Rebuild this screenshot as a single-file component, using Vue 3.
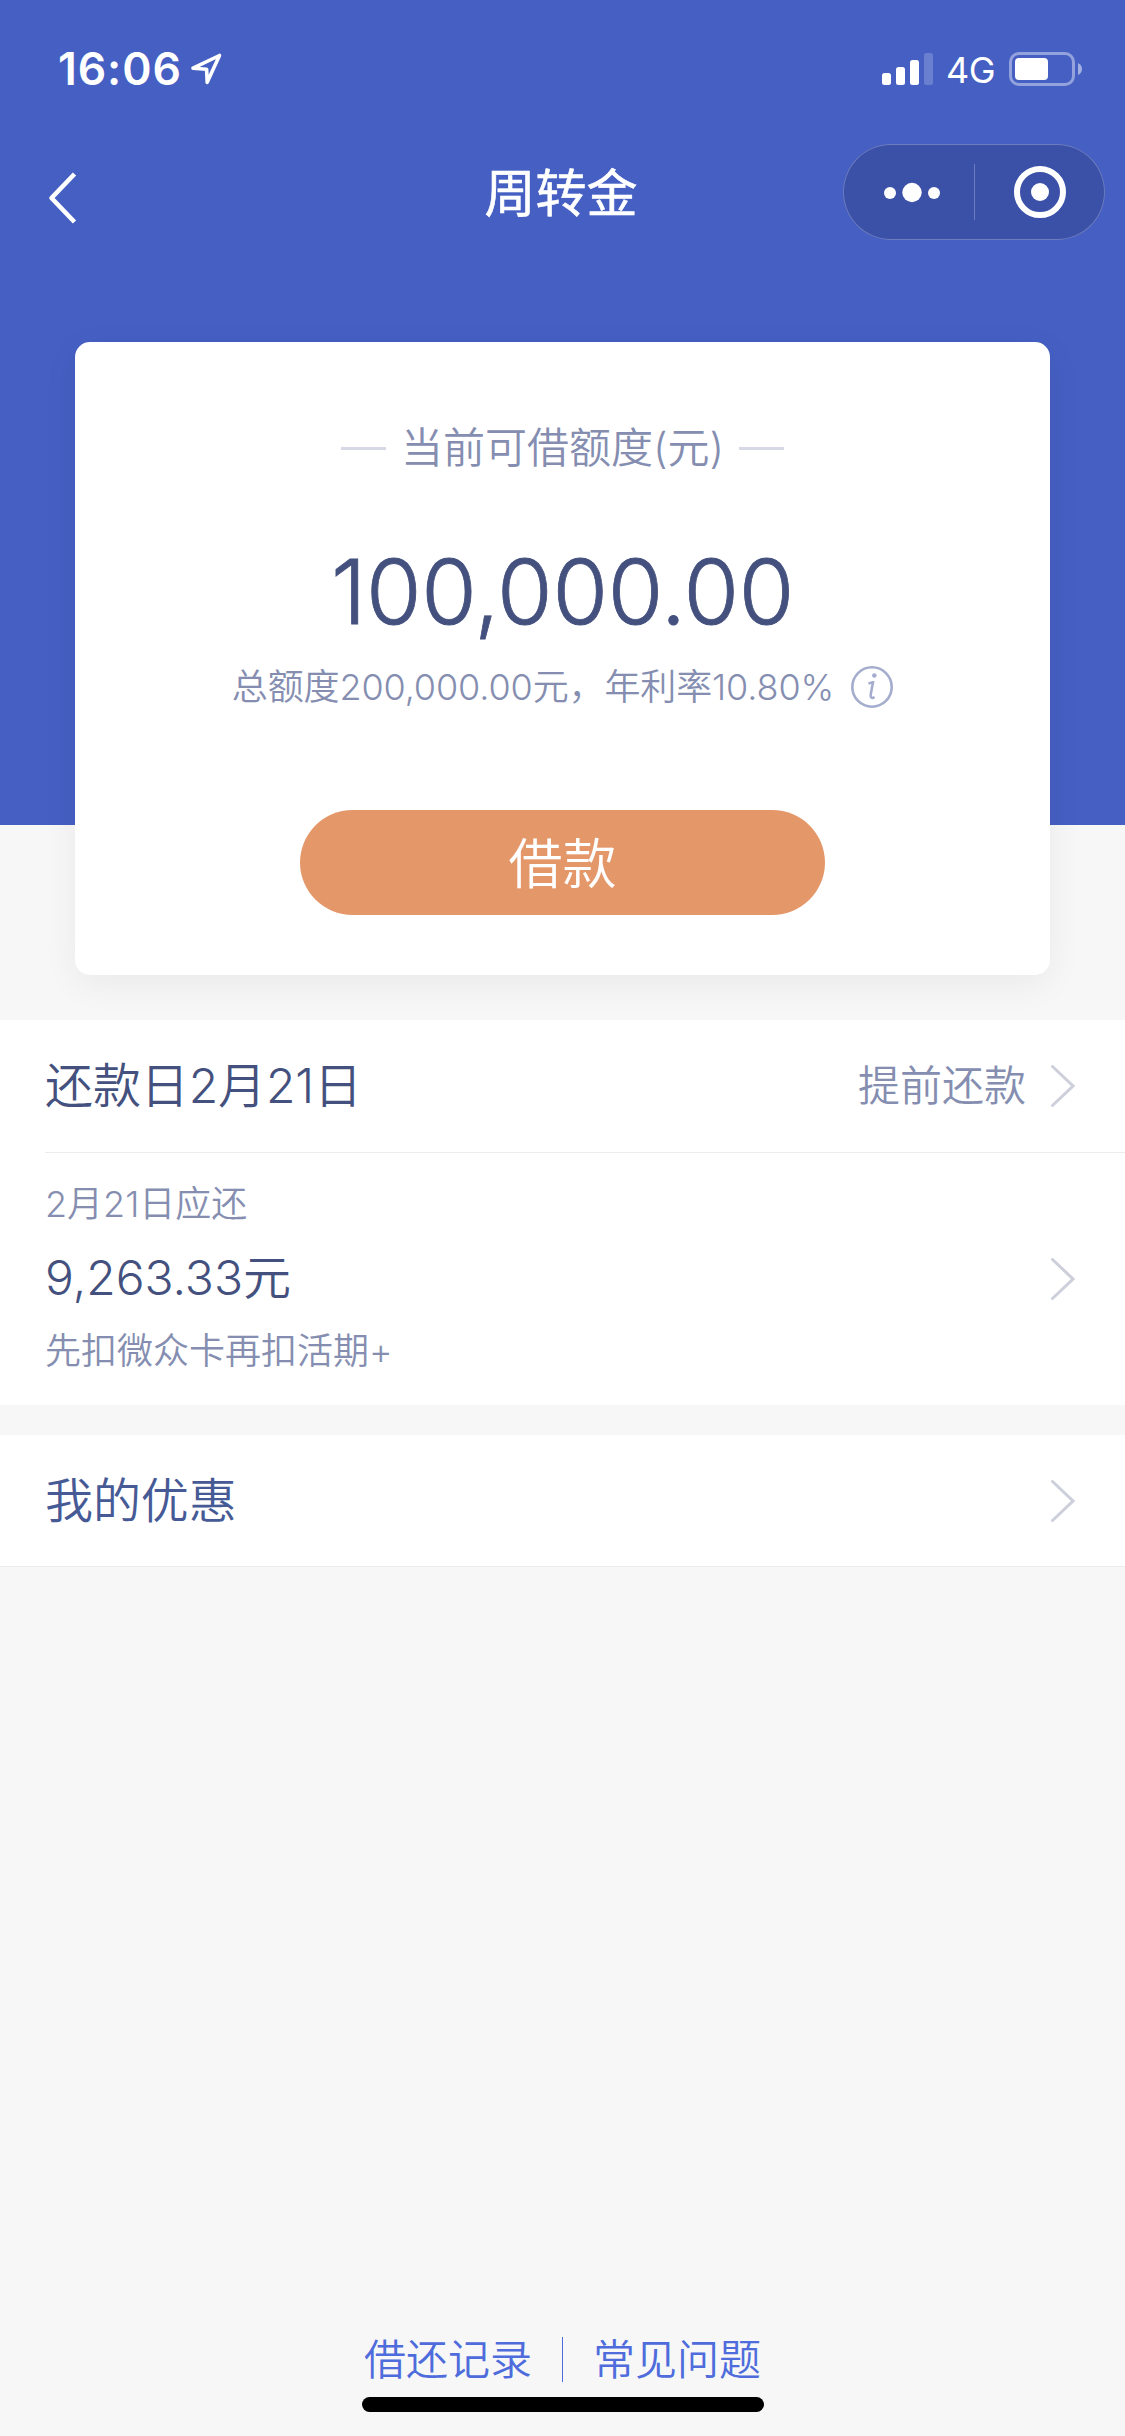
<script setup>
const quota = {
  available: '100,000.00',
  summary: '总额度200,000.00元，年利率10.80%',
}
const bill = {
  title: '还款日2月21日',
  action: '提前还款',
  label: '2月21日应还',
  amount: '9,263.33元',
  note: '先扣微众卡再扣活期+',
}
</script>

<template>
  <div class="page">
    <header class="hero">
      <div class="status">
        <span class="time">16:06</span>
        <svg class="location" width="34" height="34" viewBox="0 0 34 34">
          <path d="M3 16.2 29.5 3.5 17.2 30.3 16.6 17.2Z" />
        </svg>
        <svg class="signal" width="51" height="32" viewBox="0 0 51 32">
          <rect x="0" y="20" width="9" height="12" rx="2.5" />
          <rect x="14" y="14" width="9" height="18" rx="2.5" />
          <rect x="28" y="7" width="9" height="25" rx="2.5" />
          <rect x="42" y="0" width="9" height="32" rx="2.5" opacity=".2" />
        </svg>
        <span class="network">4G</span>
        <svg class="battery" width="74" height="34" viewBox="0 0 74 34">
          <rect class="shell" x="1.5" y="1.5" width="63" height="31" rx="8.5" />
          <rect x="6" y="6" width="33" height="22" rx="4" />
          <path d="M69 11Q73 13 73 17T69 23Z" opacity=".5" />
        </svg>
      </div>
      <div class="nav">
        <svg class="back" width="30" height="54" viewBox="0 0 30 54">
          <path d="M26.5 3 3.5 27 26.5 51" />
        </svg>
        <h1>周转金</h1>
        <div class="capsule">
          <svg width="262" height="96" viewBox="0 0 262 96">
            <circle cx="47" cy="49" r="6" />
            <circle cx="69" cy="48.5" r="9.7" />
            <circle cx="91" cy="49" r="6" />
            <rect class="split" x="131" y="20" width="1" height="56" />
            <circle class="ring" cx="197" cy="48" r="23" />
            <circle cx="197" cy="48" r="9" />
          </svg>
        </div>
      </div>
    </header>

    <section class="card">
      <div class="caption"><i></i><span>当前可借额度(元)</span><i></i></div>
      <div class="available">{{ quota.available }}</div>
      <div class="summary">
        <span>{{ quota.summary }}</span>
        <svg width="42" height="42" viewBox="0 0 42 42">
          <circle cx="21" cy="21" r="19.7" />
          <circle class="dot" cx="23.3" cy="9.5" r="2.3" />
          <path d="M17.5 17.5C19.5 17 20.5 16.3 22 16.3L19.7 28.5C19.2 32 21 32.8 23.5 31" />
        </svg>
      </div>
      <button>借款</button>
    </section>

    <section class="list">
      <div class="row head">
        <span class="title">{{ bill.title }}</span>
        <span class="action">{{ bill.action }}</span>
        <svg class="chevron" width="24" height="42" viewBox="0 0 24 42"><path d="M1.5 1.5 22 21 1.5 40.5" /></svg>
      </div>
      <div class="row bill">
        <div class="detail">
          <p class="small">{{ bill.label }}</p>
          <p class="amount">{{ bill.amount }}</p>
          <p class="small">{{ bill.note }}</p>
        </div>
        <svg class="chevron" width="24" height="42" viewBox="0 0 24 42"><path d="M1.5 1.5 22 21 1.5 40.5" /></svg>
      </div>
    </section>

    <section class="list offers">
      <div class="row">
        <span class="title">我的优惠</span>
        <svg class="chevron" width="24" height="42" viewBox="0 0 24 42"><path d="M1.5 1.5 22 21 1.5 40.5" /></svg>
      </div>
    </section>

    <footer>
      <nav><a>借还记录</a><i></i><a>常见问题</a></nav>
      <div class="home"></div>
    </footer>
  </div>
</template>

<style>
body { margin: 0; }
</style>

<style scoped>
* { box-sizing: border-box; }
.page {
  display: flex;
  flex-direction: column;
  width: 1125px;
  height: 2436px;
  background: #f7f7f7;
  font-family: Inter, "Noto Sans CJK SC", sans-serif;
  font-weight: 350;
  color: #44517e;
}
.hero {
  flex: none;
  height: 825px;
  background: #455fc3;
  color: #fff;
}
.status {
  display: flex;
  align-items: center;
  height: 138px;
  padding: 0 42px 0 58px;
}
.status svg { fill: #fff; }
.time {
  width: 124px;
  font-size: 44.5px;
  font-weight: 600;
  letter-spacing: .9px;
  white-space: nowrap;
}
.status .location {
  margin-left: 8px;
  fill: none;
  stroke: #fff;
  stroke-width: 3.6;
  stroke-linejoin: round;
}
.signal { margin-left: auto; }
.network {
  margin: 1px 14px 0 13px;
  width: 49px;
  font-size: 36px;
  font-weight: 400;
  letter-spacing: -.5px;
}
.battery .shell {
  fill: none;
  stroke: #fff;
  stroke-width: 3;
  opacity: .42;
}
.nav {
  display: grid;
  grid-template-columns: 1fr auto 1fr;
  align-items: center;
  height: 108px;
  padding: 0 20px 0 48px;
}
.back {
  margin-top: 12px;
  fill: none;
  stroke: #fff;
  stroke-width: 4.6;
  stroke-linejoin: round;
}
h1 {
  margin: 4px 0 0 -31px;
  font-size: 51px;
  font-weight: 400;
  line-height: 76px;
  -webkit-text-stroke: .6px #fff;
}
.capsule {
  justify-self: end;
  width: 262px;
  height: 96px;
  border-radius: 48px;
  background: #3b50a7;
  box-shadow: inset 0 0 0 1px rgba(255, 255, 255, .25);
}
.capsule svg { display: block; fill: #fff; }
.capsule .ring { fill: none; stroke: #fff; stroke-width: 6; }
.capsule .split { opacity: .25; }
.card {
  position: relative;
  display: flex;
  flex: none;
  flex-direction: column;
  align-items: center;
  width: 975px;
  height: 633px;
  margin: -483px 75px 45px;
  border-radius: 15px;
  background: #fff;
  box-shadow: 0 9px 36px rgba(0, 0, 0, .06);
}
.caption {
  display: flex;
  align-items: center;
  gap: 15px;
  margin-top: 76px;
  font-size: 42px;
  line-height: 60px;
  color: #858eb0;
}
.caption i { width: 45px; height: 3px; background: #d6d9e5; }
.available {
  margin-top: 64px;
  font-size: 90px;
  line-height: 100px;
  letter-spacing: -.3px;
  -webkit-text-stroke: .8px #44517e;
}
.summary {
  display: flex;
  align-items: center;
  gap: 17px;
  margin-top: 18px;
  font-size: 36px;
  line-height: 54px;
  letter-spacing: -.12px;
  color: #858eb0;
}
.summary svg { fill: none; stroke: #a4adcd; stroke-width: 2.6; }
.summary .dot { fill: #a4adcd; stroke: none; }
button {
  width: 525px;
  height: 105px;
  margin-top: 96px;
  padding: 0 0 4px;
  border: 0;
  border-radius: 53px;
  background: #e4986a;
  color: #fff;
  font: inherit;
  font-size: 54px;
}
.list { flex: none; background: #fff; }
.row {
  display: flex;
  align-items: center;
  margin-left: 45px;
  padding-right: 50px;
}
.head { height: 133px; border-bottom: 1px solid #ececec; }
.bill { height: 252px; }
.title {
  margin-right: auto;
  font-size: 48px;
  line-height: 66px;
  letter-spacing: -.1px;
}
.action { margin-right: 25px; font-size: 42px; line-height: 66px; color: #858eb0; }
.chevron {
  flex: none;
  fill: none;
  stroke: #cdcfdb;
  stroke-width: 3;
  stroke-linecap: round;
}
.detail { margin: -4px auto 0 0; }
.detail p { margin: 0; }
.small { font-size: 36px; line-height: 60px; color: #858eb0; }
.amount { font-size: 48px; line-height: 87px; }
.offers {
  height: 132px;
  margin-top: 30px;
  border-bottom: 1px solid #ececec;
}
.offers .row { height: 131px; }
.offers .title { color: #465a96; }
footer {
  display: flex;
  flex-direction: column;
  align-items: center;
  margin-top: auto;
  padding-bottom: 24px;
}
nav {
  display: flex;
  align-items: center;
  gap: 30px;
  margin-bottom: 15px;
  font-size: 42px;
  line-height: 45px;
  color: #4f6cdc;
}
nav i { width: 1px; height: 45px; background: #4f6cdc; }
.home { width: 402px; height: 15px; border-radius: 8px; background: #000; }
</style>
